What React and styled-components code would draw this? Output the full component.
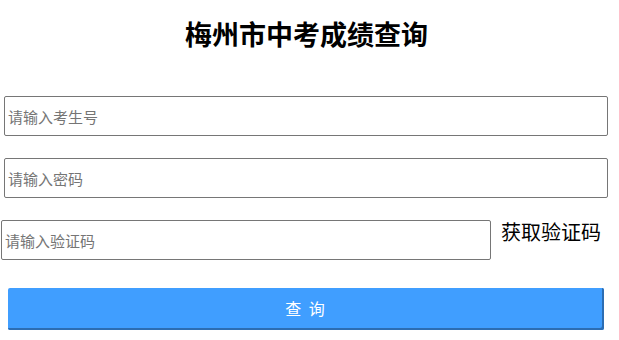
import React from "react";
import styled, { createGlobalStyle } from "styled-components";

const GlobalStyle = createGlobalStyle`
  html, body {
    margin: 0;
    padding: 0;
    background: #ffffff;
    font-family: "Noto Sans CJK SC", "Liberation Sans", sans-serif;
  }
`;

const Page = styled.div`
  width: 619px;
  padding-top: 18px;
  box-sizing: border-box;
`;

const Title = styled.h1`
  margin: 0 0 46px;
  text-align: center;
  font-size: 27px;
  line-height: 32px;
  font-weight: 700;
  color: #000;
  padding-right: 6px;
`;

const Form = styled.form`
  display: flex;
  flex-direction: column;
`;

const Field = styled.input`
  box-sizing: border-box;
  display: block;
  width: ${(p) => p.$width}px;
  height: 40px;
  margin: 0 0 22px ${(p) => p.$left}px;
  padding: 0 3px;
  border: 1px solid #767676;
  border-radius: 2px;
  font-family: "Noto Sans CJK SC", "Liberation Sans", sans-serif;
  font-size: 15px;
  color: #333;
  outline: none;

  &::placeholder {
    color: #757575;
  }
`;

const CodeRow = styled.div`
  display: flex;
  align-items: flex-start;
  gap: 10px;
  margin-bottom: 28px;

  ${Field} {
    margin-bottom: 0;
  }
`;

const CodeLink = styled.span`
  font-size: 20px;
  line-height: 24px;
  color: #000;
  cursor: pointer;
  white-space: nowrap;
`;

const SubmitButton = styled.button`
  width: 596px;
  height: 42px;
  margin-left: 8px;
  border: none;
  border-radius: 2px;
  background: #409eff;
  box-shadow: inset -2px -2px 0 #2c6db3;
  color: #fff;
  font-family: "Noto Sans CJK SC", "Liberation Sans", sans-serif;
  font-size: 16px;
  letter-spacing: 2px;
  padding: 0 0 2px;
  cursor: pointer;
`;

export default function App() {
  return (
    <Page>
      <GlobalStyle />
      <Title>梅州市中考成绩查询</Title>
      <Form onSubmit={(e) => e.preventDefault()}>
        <Field $left={4} $width={604} placeholder="请输入考生号" />
        <Field $left={4} $width={604} type="password" placeholder="请输入密码" />
        <CodeRow>
          <Field $left={1} $width={490} placeholder="请输入验证码" />
          <CodeLink>获取验证码</CodeLink>
        </CodeRow>
        <SubmitButton type="submit">查 询</SubmitButton>
      </Form>
    </Page>
  );
}
